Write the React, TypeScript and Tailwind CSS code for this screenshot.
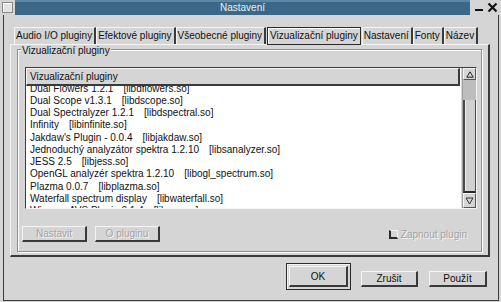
import React from "react";

const rows: [string, string][] = [
  ["Dual Flowers 1.2.1", "[libdflowers.so]"],
  ["Dual Scope v1.3.1", "[libdscope.so]"],
  ["Dual Spectralyzer 1.2.1", "[libdspectral.so]"],
  ["Infinity", "[libinfinite.so]"],
  ["Jakdaw's Plugin - 0.0.4", "[libjakdaw.so]"],
  ["Jednoduchý analyzátor spektra 1.2.10", "[libsanalyzer.so]"],
  ["JESS 2.5", "[libjess.so]"],
  ["OpenGL analyzér spektra 1.2.10", "[libogl_spectrum.so]"],
  ["Plazma 0.0.7", "[libplazma.so]"],
  ["Waterfall spectrum display", "[libwaterfall.so]"],
  ["Winamp AVS Plugin 0.1.4", "[libavs.so]"],
];

function Tab({ label, selected }: { label: string; selected?: boolean }) {
  if (selected) {
    return (
      <div className="shrink-0 whitespace-nowrap h-[18px] mx-[1px] flex items-center px-[2px] border border-[#2a2a2a] bg-[#d5d5d5] shadow-[inset_1px_1px_0_#ffffff] relative top-[1px]">
        <span className="leading-none">{label}</span>
      </div>
    );
  }
  return (
    <div className="shrink-0 whitespace-nowrap h-[17px] flex items-center pl-[1px] pr-[2px] border-t border-l border-[#f4f4f4] border-r-2 border-r-[#3a3a3a]">
      <span className="leading-none">{label}</span>
    </div>
  );
}

export default function App() {
  return (
    <div className="w-[501px] h-[302px] bg-[#d5d5d5] flex flex-col overflow-hidden text-[10px] text-[#111] font-['Liberation_Sans',Arial,sans-serif]">
      {/* title bar */}
      <div className="h-[15px] flex items-stretch shrink-0">
        <div className="w-[15px] flex items-center justify-center">
          <div className="w-[11px] h-[11px] bg-[#e4e4e4] border border-[#8a8a8a] shadow-[inset_1px_1px_0_#ffffff]" />
        </div>
        <div className="flex-1 bg-[#3a6886] border-t-2 border-[#5d88a3] flex items-center justify-center text-white text-[10px]">
          <span className="relative -top-[1px] text-[#e8eef2]">Nastavení</span>
        </div>
        <div className="w-[31px] flex items-center justify-center gap-[3px]">
          <svg width="10" height="10" viewBox="0 0 10 10">
            <rect x="1" y="6" width="8" height="2" fill="#111" />
          </svg>
          <svg width="11" height="11" viewBox="0 0 11 11">
            <path d="M1.5 1.5 L9.5 9.5 M9.5 1.5 L1.5 9.5" stroke="#111" strokeWidth="2.2" />
          </svg>
        </div>
      </div>

      {/* window frame */}
      <div className="flex-1 ml-[3px] mr-[2px] mb-[1px] border-l border-r border-b border-[#3a3a3a] flex flex-col">
        <div className="pt-[10px] pl-[6px] pr-[8px] flex flex-col">
          {/* tabs */}
          <div className="h-[19px] pl-[4px] flex items-end">
            <Tab label="Audio I/O pluginy" />
            <Tab label="Efektové pluginy" />
            <Tab label="Všeobecné pluginy" />
            <Tab label="Vizualizační pluginy" selected />
            <Tab label="Nastavení" />
            <Tab label="Fonty" />
            <Tab label="Název" />
          </div>
          {/* panel */}
          <div className="h-[213px] border-t border-l border-[#f4f4f4] border-r-2 border-b-2 border-r-[#3a3a3a] border-b-[#3a3a3a] flex flex-col">
            <div className="flex-1 mt-[4px] ml-[6px] mr-[6px] mb-[3px] border border-[#8e8e8e] shadow-[inset_1px_1px_0_#ffffff,1px_1px_0_#ffffff] relative flex flex-col">
              <span className="absolute -top-[4px] left-[3px] px-[1px] bg-[#d5d5d5] leading-none">
                Vizualizační pluginy
              </span>
              {/* list */}
              <div className="mt-[17px] ml-[7px] mr-[4px] h-[142px] border-t border-l border-[#3c3c3c] border-b border-r border-b-[#f4f4f4] border-r-[#f4f4f4] flex">
                <div className="flex-1 flex flex-col bg-white">
                  <div className="h-[18px] shrink-0 bg-[#d5d5d5] border-t border-l border-[#f4f4f4] border-r-2 border-b-2 border-r-[#3a3a3a] border-b-[#3a3a3a] flex items-center pl-[3px] mr-[1px]">
                    <span className="leading-none">Vizualizační pluginy</span>
                  </div>
                  <div className="flex-1 overflow-hidden">
                    <div className="-mt-[3.4px] pl-[4px]">
                      {rows.map(([n, l]) => (
                        <div key={n} className="h-[12.25px] flex items-center whitespace-pre leading-none">
                          <span>{n}</span>
                          <span className="ml-[10px]">{l}</span>
                        </div>
                      ))}
                    </div>
                  </div>
                </div>
                {/* scrollbar */}
                <div className="w-[14px] ml-[1px] shrink-0 bg-[#c4c4c4] border-l border-[#a0a0a0] flex flex-col">
                  <div className="h-[12px] bg-[#d5d5d5] border-t border-l border-[#f4f4f4] border-r border-b border-r-[#555] border-b-[#555] flex items-center justify-center">
                    <svg width="8" height="7" viewBox="0 0 8 7">
                      <path d="M4 0.8 L7.2 6.2 L0.8 6.2 Z" fill="none" stroke="#222" strokeWidth="1" />
                    </svg>
                  </div>
                  <div className="h-[20px] bg-[#bdbdbd]" />
                  <div className="flex-1 bg-[#d0d0d0] border-l-2 border-[#4a4a4a] border-r border-b-2 border-r-[#4a4a4a] border-b-[#2a2a2a] shadow-[inset_1px_0_0_#eaeaea]" />
                  <div className="h-[15px] bg-[#d5d5d5] border-t border-l border-[#f4f4f4] border-r border-b border-r-[#555] border-b-[#555] flex items-center justify-center">
                    <svg width="9" height="8" viewBox="0 0 9 8">
                      <path d="M1 1 L8 1 L4.5 7 Z" fill="none" stroke="#333" strokeWidth="1" />
                    </svg>
                  </div>
                </div>
              </div>
              {/* buttons row */}
              <div className="mt-[17px] h-[16px] pl-[4px] pr-[14px] flex items-center">
                <div className="w-[65px] h-[16px] border-t border-l border-[#f4f4f4] border-r-2 border-b-2 border-r-[#3a3a3a] border-b-[#3a3a3a] flex items-center justify-center text-[#a4a4a4] [text-shadow:1px_1px_0_#f4f4f4]">
                  Nastavit
                </div>
                <div className="ml-[8px] w-[65px] h-[16px] border-t border-l border-[#f4f4f4] border-r-2 border-b-2 border-r-[#3a3a3a] border-b-[#3a3a3a] flex items-center justify-center text-[#a4a4a4] [text-shadow:1px_1px_0_#f4f4f4]">
                  O pluginu
                </div>
                <div className="ml-auto flex items-center">
                  <div className="w-[9px] h-[9px] border-t border-r border-[#f4f4f4] border-l-2 border-b-2 border-l-[#2a2a2a] border-b-[#2a2a2a] bg-[#d5d5d5]" />
                  <span className="ml-[3px] text-[#a4a4a4] [text-shadow:1px_1px_0_#f4f4f4]">Zapnout plugin</span>
                </div>
              </div>
            </div>
          </div>
        </div>
        {/* dialog buttons */}
        <div className="flex items-start justify-end pr-[11px] pt-[6px]">
          <div className="w-[65px] h-[27px] border border-[#2a2a2a] p-[2px] shadow-[inset_1px_1px_0_#f4f4f4]">
            <div className="w-full h-full border-t border-l border-[#f4f4f4] border-r-2 border-b-2 border-r-[#3a3a3a] border-b-[#3a3a3a] flex items-center justify-center">
              OK
            </div>
          </div>
          <div className="ml-[10px] mt-[8px] w-[57px] h-[16px] border-t border-l border-[#f4f4f4] border-r-2 border-b-2 border-r-[#3a3a3a] border-b-[#3a3a3a] flex items-center justify-center">
            Zrušit
          </div>
          <div className="ml-[11px] mt-[8px] w-[58px] h-[16px] border-t border-l border-[#f4f4f4] border-r-2 border-b-2 border-r-[#3a3a3a] border-b-[#3a3a3a] flex items-center justify-center">
            Použít
          </div>
        </div>
      </div>
    </div>
  );
}
